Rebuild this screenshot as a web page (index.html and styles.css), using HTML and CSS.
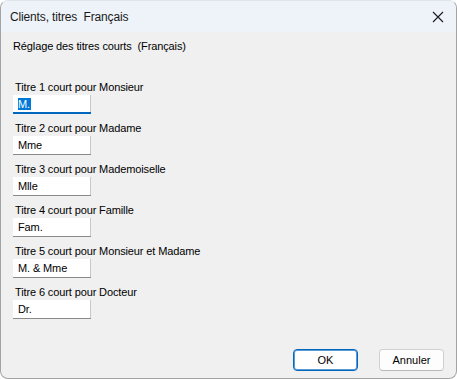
FILE: index.html
```html
<!DOCTYPE html>
<html lang="fr">
<head>
    <meta charset="UTF-8">
    <title>Clients, titres Français</title>
    <link rel="stylesheet" href="styles.css">
</head>
<body>
    <div class="Dialog">
        <div class="Dialog-titlebar">
            <span class="Dialog-title">Clients, titres&nbsp; Français</span>
            <span class="Dialog-close">
                <svg width="12" height="12" viewBox="0 0 12 12">
                    <path d="M1 1 L11 11 M11 1 L1 11" stroke="#1a1a1a" stroke-width="1.1" fill="none"/>
                </svg>
            </span>
        </div>

        <div class="Dialog-body">
            <p class="Dialog-heading">Réglage des titres courts&nbsp; (Français)</p>

            <div class="Fields">
                <div class="Field">
                    <span class="Field-label">Titre 1 court pour Monsieur</span>
                    <div class="Field-edit Field-edit--focus"><span class="Field-sel">M.</span></div>
                </div>
                <div class="Field">
                    <span class="Field-label">Titre 2 court pour Madame</span>
                    <div class="Field-edit">Mme</div>
                </div>
                <div class="Field">
                    <span class="Field-label">Titre 3 court pour Mademoiselle</span>
                    <div class="Field-edit">Mlle</div>
                </div>
                <div class="Field">
                    <span class="Field-label">Titre 4 court pour Famille</span>
                    <div class="Field-edit">Fam.</div>
                </div>
                <div class="Field">
                    <span class="Field-label">Titre 5 court pour Monsieur et Madame</span>
                    <div class="Field-edit">M. &amp; Mme</div>
                </div>
                <div class="Field">
                    <span class="Field-label">Titre 6 court pour Docteur</span>
                    <div class="Field-edit">Dr.</div>
                </div>
            </div>

            <div class="Dialog-actions">
                <button type="button" class="Dialog-button Dialog-button--default">OK</button>
                <button type="button" class="Dialog-button">Annuler</button>
            </div>
        </div>
    </div>
</body>
</html>
```

FILE: styles.css
```css
* {
    margin: 0;
    padding: 0;
    box-sizing: border-box;
}

html, body {
    width: 457px;
    height: 379px;
    background: #ffffff;
    overflow: hidden;
}

body {
    font-family: 'Liberation Sans', Arial, sans-serif;
    font-size: 11px;
    letter-spacing: -0.12px;
    color: #000000;
}

.Dialog {
    display: flex;
    flex-direction: column;
    width: 457px;
    height: 379px;
    background: #f0f0f0;
    border: 1px solid #a3a3a3;
    border-top-color: #dfe4ea;
    border-radius: 8px;
    overflow: hidden;
}

.Dialog-titlebar {
    display: flex;
    align-items: center;
    justify-content: space-between;
    height: 31px;
    padding: 0 12px 0 9px;
    background: #eef3f9;
}

.Dialog-title {
    font-family: 'Liberation Sans', Arial, sans-serif;
    font-size: 12px;
    letter-spacing: -0.15px;
    color: #1a1a1a;
}

.Dialog-close {
    display: flex;
    width: 12px;
    height: 12px;
}

.Dialog-body {
    display: flex;
    flex-direction: column;
    flex: 1;
    padding: 7px 12px 7px 11px;
}

.Dialog-heading {
    line-height: 14px;
    padding-left: 1px;
}

.Fields {
    display: flex;
    flex-direction: column;
    gap: 7px;
    margin-top: 27px;
}

.Field {
    display: flex;
    flex-direction: column;
    align-items: flex-start;
    gap: 1px;
}

.Field-label {
    line-height: 14px;
    padding-left: 3px;
}

.Field-edit {
    width: 78px;
    height: 19px;
    margin-left: 1px;
    padding: 3px 0 0 5px;
    line-height: 13px;
    background: #ffffff;
    border-bottom: 1px solid #8a8a8a;
    box-shadow: inset -1px 0 0 #c8c8c8;
}

.Field-edit--focus {
    border-bottom: 2px solid #0067c0;
}

.Field-sel {
    background: #0078d7;
    color: #ffffff;
    padding-right: 1px;
}

.Dialog-actions {
    display: flex;
    justify-content: flex-end;
    gap: 21px;
    margin-top: auto;
}

.Dialog-button {
    width: 65px;
    height: 22px;
    font-family: 'Liberation Sans', Arial, sans-serif;
    font-size: 11px;
    color: #000000;
    background: #fdfdfd;
    border: 1px solid #d0d0d0;
    border-bottom-color: #b8b8b8;
    border-radius: 4px;
}

.Dialog-button--default {
    background: #ffffff;
    border: 1px solid #0067c0;
    box-shadow: inset 0 0 0 1px #5b9bd5;
}
```
